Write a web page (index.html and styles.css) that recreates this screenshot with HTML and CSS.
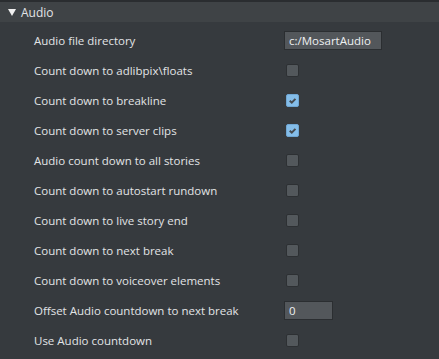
FILE: index.html
```html
<!DOCTYPE html>
<html lang="en">
<head>
    <meta charset="UTF-8">
    <title>Audio settings</title>
    <link rel="stylesheet" href="styles.css">
</head>
<body>
    <div class="panel">
        <div class="header">
            <span class="arrow"></span>
            <span class="title">Audio</span>
        </div>
        <div class="rows">
            <div class="row"><span class="label">Audio file directory</span><span class="field wide">c:/MosartAudio</span></div>
            <div class="row"><span class="label">Count down to adlibpix\floats</span><span class="check"></span></div>
            <div class="row"><span class="label">Count down to breakline</span><span class="check on"><svg viewBox="0 0 12 12"><path d="M3 6.2 L5.2 8.3 L9.2 4.2" /></svg></span></div>
            <div class="row"><span class="label">Count down to server clips</span><span class="check on"><svg viewBox="0 0 12 12"><path d="M3 6.2 L5.2 8.3 L9.2 4.2" /></svg></span></div>
            <div class="row"><span class="label">Audio count down to all stories</span><span class="check"></span></div>
            <div class="row"><span class="label">Count down to autostart rundown</span><span class="check"></span></div>
            <div class="row"><span class="label">Count down to live story end</span><span class="check"></span></div>
            <div class="row"><span class="label">Count down to next break</span><span class="check"></span></div>
            <div class="row"><span class="label">Count down to voiceover elements</span><span class="check"></span></div>
            <div class="row"><span class="label">Offset Audio countdown to next break</span><span class="field num">0</span></div>
            <div class="row"><span class="label">Use Audio countdown</span><span class="check"></span></div>
        </div>
    </div>
</body>
</html>
```

FILE: styles.css
```css
html, body {
    margin: 0;
    padding: 0;
    background: #363a3e;
}
.panel {
    width: 439px;
    height: 359px;
    background: #363a3e;
    font-family: "Open Sans", "Noto Sans", sans-serif;
    font-size: 11.5px;
    color: #e2e4e6;
    border-top: 2px solid #2a2d30;
    box-sizing: border-box;
}
.header {
    height: 20px;
    background: #3f4346;
    display: flex;
    align-items: center;
    padding-left: 8px;
}
.arrow {
    width: 0;
    height: 0;
    border-left: 4px solid transparent;
    border-right: 4px solid transparent;
    border-top: 7px solid #f0f0f0;
    margin-right: 5px;
    margin-top: 1px;
}
.title {
    font-size: 12px;
}
.rows {
    padding-top: 3px;
}
.row {
    height: 30px;
    display: flex;
    align-items: center;
    padding-left: 34px;
}
.label {
    width: 250px;
}
.field {
    box-sizing: border-box;
    height: 19px;
    background: #53575b;
    border: 1px solid #2b2e31;
    display: flex;
    align-items: center;
    padding-left: 4px;
    color: #eef0f2;
}
.field.wide {
    width: 98px;
}
.field.num {
    width: 49px;
}
.check {
    box-sizing: border-box;
    width: 13px;
    height: 13px;
    margin-left: 2px;
    border-radius: 2px;
    background: #53585c;
    border: 1px solid #2d3033;
}
.check.on {
    background: #84bde9;
    border-color: #6fa6d3;
}
.check svg {
    display: block;
    width: 11px;
    height: 11px;
}
.check path {
    fill: none;
    stroke: #464b50;
    stroke-width: 2.2;
}
```
